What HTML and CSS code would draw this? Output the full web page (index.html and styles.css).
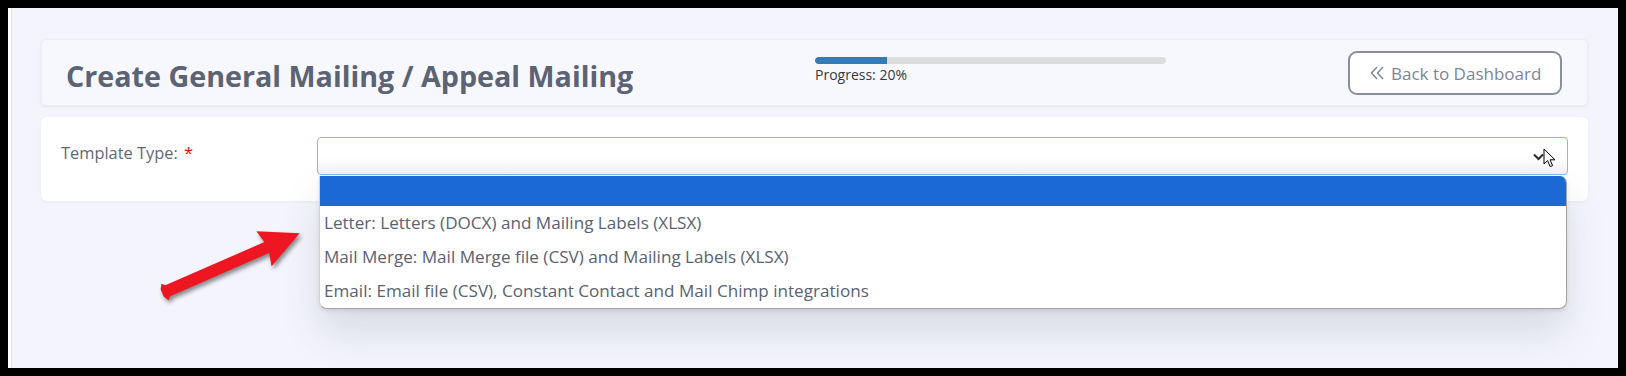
FILE: index.html
```html
<!DOCTYPE html>
<html lang="en">
<head>
<meta charset="utf-8">
<title>Create General Mailing</title>
<link rel="stylesheet" href="styles.css">
</head>
<body>
<div class="frame">
  <div class="page">
    <header class="head-card">
      <div class="title-box"><h1 class="title">Create General Mailing / Appeal Mailing</h1></div>
      <div class="progress-wrap">
        <div class="progress"><div class="progress-fill" style="width:20.5%"></div></div>
        <div class="progress-label">Progress: 20%</div>
      </div>
      <button class="back-btn" type="button">
        <svg class="back-icon" width="14" height="14" viewBox="0 0 14 14" aria-hidden="true"><polyline points="7,1 1.5,7 7,13" /><polyline points="13,1 7.5,7 13,13" /></svg>
        <span>Back to Dashboard</span>
      </button>
    </header>
    <section class="form-card">
      <label class="form-label">Template Type: <span class="req">*</span></label>
      <div class="select-wrap">
        <div class="select">
          <svg class="caret" width="12" height="8" viewBox="0 0 12 8" aria-hidden="true"><polyline points="1,1.5 5.5,6 10,1.5" /></svg>
          <svg class="cursor" width="14" height="20" viewBox="0 0 14 20" aria-hidden="true"><path d="M1 1 L1 16 L4.6 12.6 L7.2 18.6 L9.6 17.6 L7 11.8 L12 11.8 Z" /></svg>
        </div>
        <ul class="dropdown">
          <li class="opt active"></li>
          <li class="opt">Letter: Letters (DOCX) and Mailing Labels (XLSX)</li>
          <li class="opt">Mail Merge: Mail Merge file (CSV) and Mailing Labels (XLSX)</li>
          <li class="opt">Email: Email file (CSV), Constant Contact and Mail Chimp integrations</li>
        </ul>
      </div>
    </section>
  </div>
  <svg class="red-arrow" width="180" height="110" viewBox="0 0 180 110" aria-hidden="true">
    <g transform="translate(17,78) rotate(-23.6)">
      <polygon points="0,-9 3,-6 111,-6 108,-19 147,0 108,19 111,6 3,6 0,9 -3,4 -3,-4" />
    </g>
  </svg>
</div>
</body>
</html>
```

FILE: styles.css
```css
* { box-sizing: border-box; }

html, body {
  margin: 0;
  padding: 0;
  background: #000;
}

body {
  width: 1626px;
  height: 376px;
  padding: 8px;
  font-family: "Open Sans", "Noto Sans", sans-serif;
}

.frame {
  position: relative;
  width: 1610px;
  height: 360px;
  background: #f4f5fc;
  border-left: 3px solid #ffffff;
  overflow: hidden;
}

.page {
  height: 100%;
  border-left: 1px solid #e4e5ec;
  padding: 31px 30px 0 29px;
  display: flex;
  flex-direction: column;
  gap: 11px;
}

.head-card {
  height: 67px;
  background: #f7f8fd;
  border: 1px solid #eceef4;
  border-radius: 5px;
  box-shadow: 0 1px 3px rgba(40, 50, 80, 0.08);
  display: flex;
  align-items: flex-start;
  justify-content: space-between;
  padding: 0 25px 0 24px;
}

.title-box {
  width: 567px;
  padding-top: 17px;
}

.title {
  margin: 0;
  font-size: 28.7px;
  line-height: 38px;
  font-weight: 700;
  color: #5b6374;
  white-space: nowrap;
}

.progress-wrap {
  width: 351px;
  padding-top: 17px;
}

.progress {
  height: 7px;
  background: #dddddd;
  border-radius: 4px;
  overflow: hidden;
}

.progress-fill {
  height: 100%;
  background: #337ab7;
  border-radius: 4px 0 0 4px;
}

.progress-label {
  margin-top: 1px;
  font-size: 14px;
  line-height: 19px;
  color: #333a44;
}

.back-btn {
  margin-top: 11px;
  width: 214px;
  height: 44px;
  background: #ffffff;
  border: 2px solid #858fa1;
  border-radius: 9px;
  display: flex;
  align-items: center;
  gap: 7px;
  padding: 0 0 0 20px;
  font-family: inherit;
  font-size: 17px;
  color: #7b859a;
}

.back-icon polyline {
  fill: none;
  stroke: #7b859a;
  stroke-width: 1.4;
}

.form-card {
  height: 84px;
  background: #ffffff;
  border-radius: 6px;
  box-shadow: 0 1px 3px rgba(40, 50, 80, 0.06);
  padding: 20px 20px 0 20px;
  display: flex;
  align-items: flex-start;
}

.form-label {
  width: 256px;
  flex: none;
  padding-top: 5px;
  font-size: 16.4px;
  line-height: 22px;
  color: #5f6779;
}

.req {
  color: #ff0000;
  margin-left: 2px;
}

.select-wrap {
  position: relative;
  flex: 1;
}

.select {
  position: relative;
  height: 38px;
  border: 1px solid #86b7f0;
  border-radius: 4px;
  background: linear-gradient(to bottom, #ffffff 0%, #ffffff 55%, #f1f1f3 100%);
}

.caret {
  position: absolute;
  right: 22px;
  top: 15px;
}

.caret polyline {
  fill: none;
  stroke: #2b2b2b;
  stroke-width: 2;
}

.cursor {
  position: absolute;
  right: 10px;
  top: 10px;
}

.cursor path {
  fill: #ffffff;
  stroke: #000000;
  stroke-width: 1;
  stroke-linejoin: round;
}

.dropdown {
  position: absolute;
  top: 39px;
  left: 2px;
  right: 1px;
  margin: 0;
  padding: 0;
  list-style: none;
  background: #ffffff;
  border-right: 1px solid #a3a3a3;
  border-bottom: 1px solid #a3a3a3;
  border-left: 1px solid #d2d2d2;
  border-radius: 0 7px 8px 8px;
  overflow: hidden;
  box-shadow: 0 24px 40px rgba(40, 45, 70, 0.13), 0 2px 4px rgba(0, 0, 0, 0.1);
}

.opt {
  height: 34px;
  padding: 0 4px;
  font-size: 17.1px;
  line-height: 34px;
  color: #5a6273;
  white-space: nowrap;
}

.opt.active {
  height: 30px;
  background: #1a69d4;
}

.red-arrow {
  position: absolute;
  left: 137px;
  top: 206px;
  filter: drop-shadow(2px 3px 2px rgba(0, 0, 0, 0.45));
}

.red-arrow polygon {
  fill: #ee1620;
}
```
